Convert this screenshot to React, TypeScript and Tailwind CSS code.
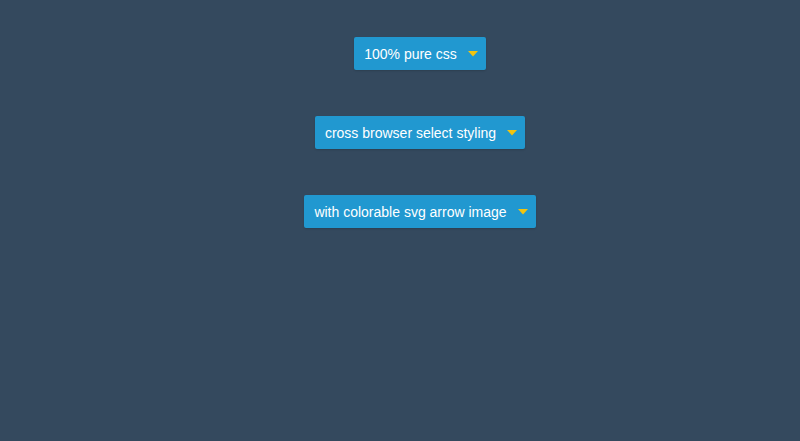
const items = ["100% pure css", "cross browser select styling", "with colorable svg arrow image"];

function Select({ label }: { label: string }) {
  return (
    <div className="flex h-[33px] items-center rounded-[2px] bg-[#2198d0] pl-[10px] pr-[8px] shadow-[0_1px_2px_rgba(0,0,0,0.15)]">
      <span className="text-[14px] leading-none text-white">{label}</span>
      <svg className="ml-[11px]" width="10" height="6" viewBox="0 0 10 6">
        <path d="M0 0h10L5 5.5z" fill="#f1c40f" />
      </svg>
    </div>
  );
}

export default function App() {
  return (
    <div className="flex h-[441px] w-full flex-col items-center gap-[46px] bg-[#34495e] pl-[40px] pt-[37px] font-['Liberation_Sans',Arial,sans-serif]">
      {items.map(label => (
        <Select key={label} label={label} />
      ))}
    </div>
  );
}
